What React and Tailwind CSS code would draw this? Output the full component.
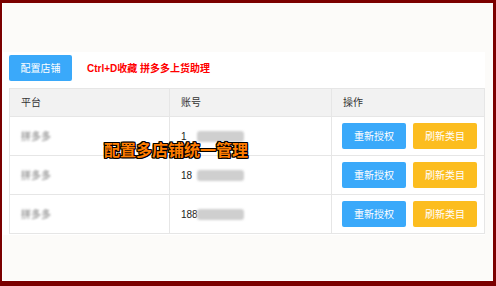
const rows = [
  { account: '1' },
  { account: '18' },
  { account: '188' },
];

const App = () => {
  return (
    <div className="relative w-[496px] h-[286px] bg-[#7b0000] pt-[3px] pl-[2px] pr-[3px] pb-[5px] font-['Liberation_Sans','Noto_Sans_CJK_SC',sans-serif]">
      <div className="h-full bg-[#fcfbf9] border-l border-b border-white pt-[49px] pr-[8px]">
        <div className="bg-white pl-[6px] pt-[3px] pb-px">
          <div className="flex items-center h-[26px]">
            <button className="w-[63px] h-[26px] rounded-[2px] bg-[#3aa9fa] text-white text-[10px]">配置店铺</button>
            <span className="ml-[15px] text-[10px] font-bold text-[#ff0000]">Ctrl+D收藏 拼多多上货助理</span>
          </div>
          <div className="mt-[7px] border border-[#e6e6e6] text-[10px] text-[#333]">
            <div className="grid grid-cols-[160px_162px_1fr] h-[27px] bg-[#f2f2f2] items-center">
              <div className="pl-[11px] h-full flex items-center border-r border-[#e6e6e6]">平台</div>
              <div className="pl-[11px] h-full flex items-center border-r border-[#e6e6e6]">账号</div>
              <div className="pl-[11px]">操作</div>
            </div>
            {rows.map((r, i) => (
              <div key={i} className="grid grid-cols-[160px_162px_1fr] h-[39px] border-t border-[#e6e6e6] items-center">
                <div className="pl-[11px] h-full flex items-center border-r border-[#e6e6e6]">
                  <span className="text-[#777] blur-[0.8px]">拼多多</span>
                </div>
                <div className="pl-[11px] h-full flex items-center border-r border-[#e6e6e6]">
                  <span className="w-[16px] whitespace-nowrap text-[#222]">{r.account}</span>
                  <span className="w-[47px] h-[11px] rounded-[3px] bg-[#cfcfcf] blur-[1px]"></span>
                </div>
                <div className="pl-[10px] flex gap-[7px]">
                  <button className="w-[64px] h-[26px] rounded-[2px] bg-[#3aa9fa] text-white text-[10px]">重新授权</button>
                  <button className="w-[64px] h-[26px] rounded-[2px] bg-[#fcbd1f] text-white text-[10px]">刷新类目</button>
                </div>
              </div>
            ))}
          </div>
        </div>
      </div>
      <div className="absolute left-[104px] top-[139px] text-[16px] leading-[20px] font-bold text-[#ff7d00] font-['Noto_Sans_CJK_SC',sans-serif] [text-shadow:1px_1px_0_#000,-1px_-1px_0_#000,1px_-1px_0_#000,-1px_1px_0_#000,0_1px_0_#000,1px_0_0_#000,0_-1px_0_#000,-1px_0_0_#000]">
        配置多店铺统一管理
      </div>
    </div>
  );
};

export default App;
